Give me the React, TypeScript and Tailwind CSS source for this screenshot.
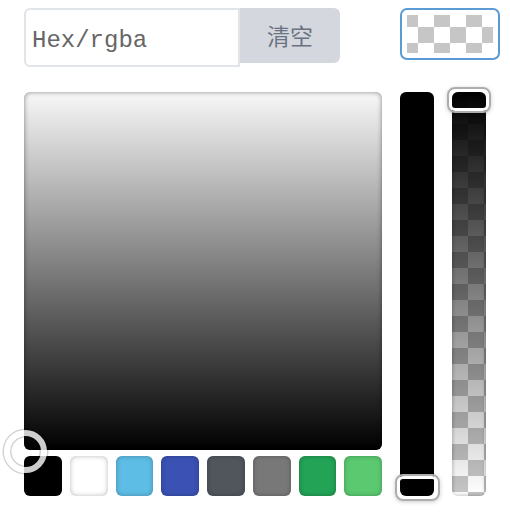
import React from "react";

const swatches = [
  "bg-[#000000]",
  "bg-[#ffffff]",
  "bg-[#5dbde5]",
  "bg-[#3b52b4]",
  "bg-[#51565d]",
  "bg-[#787878]",
  "bg-[#22a356]",
  "bg-[#5ac96f]",
];

export default function App() {
  return (
    <div className="w-[510px] h-[526px] bg-white pl-6 pr-[10px] pt-2">
      {/* top row: input + clear button, preview */}
      <div className="flex justify-between items-start">
        <div className="flex items-start">
          <input
            type="text"
            placeholder="Hex/rgba"
            className="w-[216px] h-[59px] border-2 border-[#e1e4e8] rounded-l-[6px] pl-[6px] pr-[6px] pt-[5px] text-[24px] text-[#555] placeholder:text-[#666666] outline-none font-['Liberation_Mono','Courier_New',monospace]"
          />
          <button className="w-[100px] h-[55px] bg-[#d4d8de] rounded-r-[6px] text-[23px] text-[#6b7280] font-['Noto_Sans_CJK_SC','Noto_Sans',sans-serif]">
            清空
          </button>
        </div>
        <div className="w-[100px] h-[52px] border-2 border-[#5b9bd5] rounded-[7px] p-[5px]">
          <div className="w-full h-full bg-[conic-gradient(#ffffff_25%,#c6c6c6_0_50%,#ffffff_0_75%,#c6c6c6_0)] bg-[length:32px_32px] bg-[position:-5px_-4px]" />
        </div>
      </div>

      {/* picker body */}
      <div className="mt-[25px] flex items-start">
        <div className="w-[358px]">
          <div className="relative h-[358px] rounded-[6px] bg-linear-to-b/srgb from-[#f8f8f8] to-black shadow-[inset_0_0_5px_rgba(0,0,0,0.45)]">
            <div className="absolute left-[-20px] bottom-[-23px] w-[43px] h-[43px] rounded-full border-[6px] border-white/80 shadow-[0_0_0_1.5px_rgba(0,0,0,0.18),inset_0_0_0_1.5px_rgba(0,0,0,0.18)]" />
          </div>
          <div className="mt-[6px] flex gap-2">
            {swatches.map((c, i) => (
              <div
                key={i}
                className={`flex-1 h-[40px] rounded-[6px] ${c} shadow-[inset_0_0_5px_rgba(0,0,0,0.28)]`}
              />
            ))}
          </div>
        </div>

        {/* hue bar */}
        <div className="relative ml-[18px] w-[34px] h-[404px] rounded-[6px] bg-black">
          <div className="absolute left-[-5px] bottom-[-5px] w-[45px] h-[27px] rounded-[8px] border-2 border-[#adadad] shadow-[inset_0_0_0_3px_#ffffff,0_1px_4px_rgba(0,0,0,0.2)]" />
        </div>

        {/* alpha bar */}
        <div className="relative ml-[18px] w-[34px] h-[404px]">
          <div className="w-full h-full rounded-[6px] overflow-hidden bg-[conic-gradient(#ffffff_25%,#c6c6c6_0_50%,#ffffff_0_75%,#c6c6c6_0)] bg-[length:32px_32px]">
            <div className="w-full h-full bg-linear-to-b/srgb from-black to-transparent shadow-[inset_0_0_4px_rgba(0,0,0,0.35)]" />
          </div>
          <div className="absolute left-[-5px] top-[-5px] w-[44px] h-[26px] rounded-[8px] border-2 border-[#adadad] shadow-[inset_0_0_0_3px_#ffffff,0_1px_4px_rgba(0,0,0,0.2)]" />
        </div>
      </div>
    </div>
  );
}
